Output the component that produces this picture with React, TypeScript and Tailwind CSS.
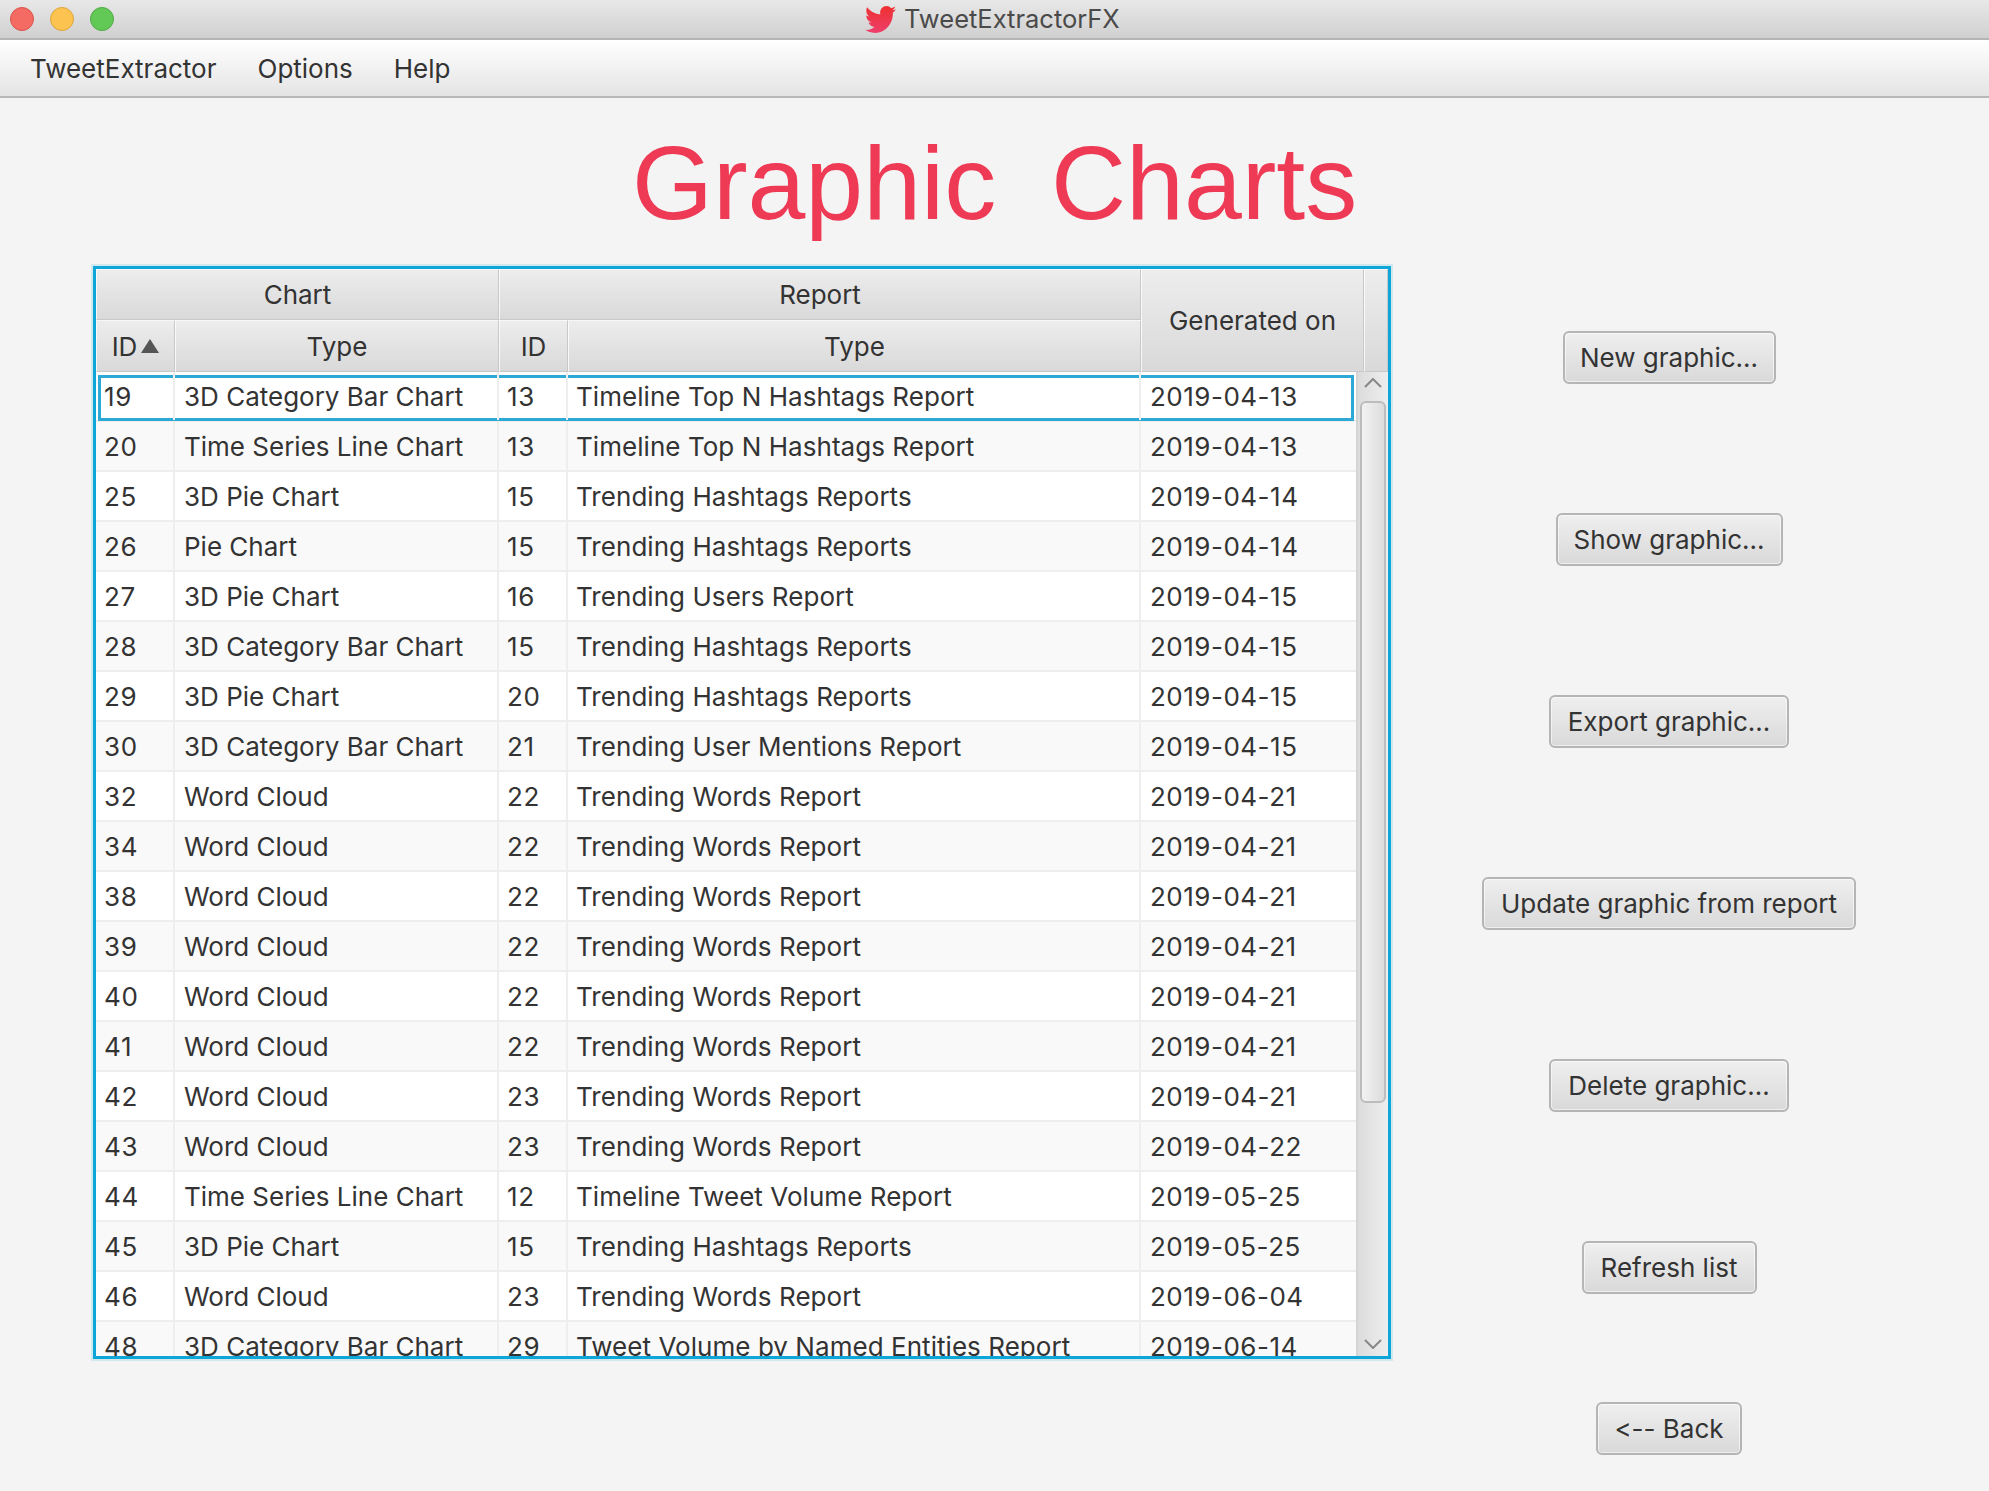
const rows: [string, string, string, string, string][] = [
  ["19", "3D Category Bar Chart", "13", "Timeline Top N Hashtags Report", "2019-04-13"],
  ["20", "Time Series Line Chart", "13", "Timeline Top N Hashtags Report", "2019-04-13"],
  ["25", "3D Pie Chart", "15", "Trending Hashtags Reports", "2019-04-14"],
  ["26", "Pie Chart", "15", "Trending Hashtags Reports", "2019-04-14"],
  ["27", "3D Pie Chart", "16", "Trending Users Report", "2019-04-15"],
  ["28", "3D Category Bar Chart", "15", "Trending Hashtags Reports", "2019-04-15"],
  ["29", "3D Pie Chart", "20", "Trending Hashtags Reports", "2019-04-15"],
  ["30", "3D Category Bar Chart", "21", "Trending User Mentions Report", "2019-04-15"],
  ["32", "Word Cloud", "22", "Trending Words Report", "2019-04-21"],
  ["34", "Word Cloud", "22", "Trending Words Report", "2019-04-21"],
  ["38", "Word Cloud", "22", "Trending Words Report", "2019-04-21"],
  ["39", "Word Cloud", "22", "Trending Words Report", "2019-04-21"],
  ["40", "Word Cloud", "22", "Trending Words Report", "2019-04-21"],
  ["41", "Word Cloud", "22", "Trending Words Report", "2019-04-21"],
  ["42", "Word Cloud", "23", "Trending Words Report", "2019-04-21"],
  ["43", "Word Cloud", "23", "Trending Words Report", "2019-04-22"],
  ["44", "Time Series Line Chart", "12", "Timeline Tweet Volume Report", "2019-05-25"],
  ["45", "3D Pie Chart", "15", "Trending Hashtags Reports", "2019-05-25"],
  ["46", "Word Cloud", "23", "Trending Words Report", "2019-06-04"],
  ["48", "3D Category Bar Chart", "29", "Tweet Volume by Named Entities Report", "2019-06-14"],
];

const buttons = [
  { label: "New graphic...", w: "w-[213px]" },
  { label: "Show graphic...", w: "w-[227px]" },
  { label: "Export graphic...", w: "w-[240px]" },
  { label: "Update graphic from report", w: "w-[374px]" },
  { label: "Delete graphic...", w: "w-[240px]" },
  { label: "Refresh list", w: "w-[175px]" },
];

function HeaderCell({ className, children }: { className: string; children: React.ReactNode }) {
  return (
    <div className={`flex items-center justify-center border border-white/80 border-r-[#c8c8c8] border-b-[#c8c8c8] bg-gradient-to-b from-[#ededed] to-[#d9d9d9] ${className}`}>
      {children}
    </div>
  );
}

function PushButton({ label, w }: { label: string; w: string }) {
  return (
    <button className={`flex h-[53px] items-center justify-center rounded-[6px] border-2 border-[#b5b5b5] bg-gradient-to-b from-[#efefef] to-[#d9d9d9] text-[26px] text-[#333] shadow-[inset_0_0_0_1px_rgba(255,255,255,0.55)] [font-feature-settings:'calt'_0] ${w}`}>
      {label}
    </button>
  );
}

export default function App() {
  return (
    <div className="h-[1491px] w-[1989px] overflow-hidden bg-[#f4f4f4] font-['Inter','Liberation_Sans',sans-serif] text-[#333]">
      {/* title bar */}
      <div className="flex h-10 items-center border-b-2 border-[#b4b4b4] bg-gradient-to-b from-[#e8e8e8] to-[#d0d0d0] pl-[10px]">
        <div className="flex w-[855px] gap-4">
          <div className="size-6 rounded-full border border-[#d9534c] bg-[#f46b63]" />
          <div className="size-6 rounded-full border border-[#dba63c] bg-[#fcc350]" />
          <div className="size-6 rounded-full border border-[#4faa46] bg-[#62c856]" />
        </div>
        <svg viewBox="0 0 512 512" preserveAspectRatio="none" className="mr-[8px] h-[33px] w-[31px]">
          <defs>
            <linearGradient id="bird" x1="0" y1="0" x2="0" y2="1">
              <stop offset="0" stopColor="#ee3030" />
              <stop offset="1" stopColor="#ee3f6c" />
            </linearGradient>
          </defs>
          <path
            fill="url(#bird)"
            d="M459.37 151.716c.325 4.548.325 9.097.325 13.645 0 138.72-105.583 298.558-298.558 298.558-59.452 0-114.68-17.219-161.137-47.106 8.447.974 16.568 1.299 25.34 1.299 49.055 0 94.213-16.568 130.274-44.832-46.132-.975-84.792-31.188-98.112-72.772 6.498.974 12.995 1.624 19.818 1.624 9.421 0 18.843-1.3 27.614-3.573-48.081-9.747-84.143-51.98-84.143-102.985v-1.299c13.969 7.797 30.214 12.67 47.431 13.319-28.264-18.843-46.781-51.005-46.781-87.391 0-19.492 5.197-37.36 14.294-52.954 51.655 63.675 129.3 105.258 216.365 109.807-1.624-7.797-2.599-15.918-2.599-24.04 0-57.828 46.782-104.934 104.934-104.934 30.213 0 57.502 12.67 76.67 33.137 23.715-4.548 46.456-13.32 66.599-25.34-7.798 24.366-24.366 44.833-46.132 57.827 21.117-2.273 41.584-8.122 60.426-16.243-14.292 20.791-32.161 39.308-52.628 54.253z"
          />
        </svg>
        <span className="text-[25.5px] text-[#4a4a4a]">TweetExtractorFX</span>
      </div>

      {/* menu bar */}
      <div className="flex h-[58px] items-center gap-[41px] border-b-2 border-[#b8b8b8] bg-gradient-to-b from-white to-[#e4e4e4] pl-[30px] text-[26px]">
        <span>TweetExtractor</span>
        <span>Options</span>
        <span>Help</span>
      </div>

      <h1 className="mt-[10px] h-[158px] whitespace-pre pl-[632px] font-['Liberation_Sans',sans-serif] text-[104px] leading-[150px] text-[#ee3a55] [word-spacing:-1.5px]">
        Graphic  Charts
      </h1>

      <div className="flex">
        {/* table */}
        <div className="ml-[93px] flex h-[1093px] w-[1298px] flex-col overflow-hidden border-[3px] border-[#0ea5d8] bg-white text-[26px] shadow-[0_0_0_2px_rgba(14,165,216,0.15)]">
          <div className="flex h-[103px] shrink-0">
            <div className="flex w-[403px] flex-col">
              <HeaderCell className="h-[51px]">Chart</HeaderCell>
              <div className="flex h-[52px]">
                <HeaderCell className="w-[79px] gap-1">
                  ID
                  <svg viewBox="0 0 18 14" className="h-[14px] w-[18px] fill-[#555]">
                    <path d="M9 0l9 14H0z" />
                  </svg>
                </HeaderCell>
                <HeaderCell className="w-[324px]">Type</HeaderCell>
              </div>
            </div>
            <div className="flex w-[642px] flex-col">
              <HeaderCell className="h-[51px]">Report</HeaderCell>
              <div className="flex h-[52px]">
                <HeaderCell className="w-[69px]">ID</HeaderCell>
                <HeaderCell className="w-[573px]">Type</HeaderCell>
              </div>
            </div>
            <HeaderCell className="w-[223px]">Generated on</HeaderCell>
            <HeaderCell className="flex-1">{null}</HeaderCell>
          </div>

          <div className="flex min-h-0 flex-1">
            <div className="min-w-0 flex-1 overflow-hidden">
              {rows.map((r, i) => (
                <div
                  key={r[0]}
                  className={`relative grid h-[50px] grid-cols-[79px_324px_69px_573px_1fr] border-b-2 border-[#eeeeee] ${
                    i % 2 === 0 ? "bg-white" : "bg-[#f9f9f9]"
                  }`}
                >
                  {i === 0 && (
                    <div className="absolute inset-x-[2px] top-[3px] bottom-[-1px] border-[3px] border-[#2ea9d6]" />
                  )}
                  <div className="relative z-10 flex items-center border-r-2 border-[#eeeeee] pl-[8px] tracking-[0.6px]">{r[0]}</div>
                  <div className="relative z-10 flex items-center border-r-2 border-[#eeeeee] pl-[9px]">{r[1]}</div>
                  <div className="relative z-10 flex items-center border-r-2 border-[#eeeeee] pl-[8px] tracking-[0.6px]">{r[2]}</div>
                  <div className="relative z-10 flex items-center border-r-2 border-[#eeeeee] pl-[8px] tracking-[0.05px]">{r[3]}</div>
                  <div className="relative z-10 flex items-center pl-[9px] tracking-[0.5px]">{r[4]}</div>
                </div>
              ))}
            </div>

            {/* scroll bar */}
            <div className="flex w-[32px] shrink-0 flex-col items-center border-l-2 border-[#d4d4d4] bg-gradient-to-r from-[#dcdcdc] to-[#eeeeee]">
              <svg viewBox="0 0 18 10" className="mt-[6px] h-[10px] w-[18px] fill-none stroke-[#888] stroke-2">
                <path d="M1 9l8-8 8 8" />
              </svg>
              <div className="mt-[13px] h-[702px] w-[26px] rounded-[6px] border-2 border-[#bcbcbc] bg-gradient-to-r from-[#f2f2f2] to-[#dcdcdc]" />
              <svg viewBox="0 0 18 10" className="mt-[236px] h-[10px] w-[18px] fill-none stroke-[#888] stroke-2">
                <path d="M1 1l8 8 8-8" />
              </svg>
            </div>
          </div>
        </div>

        {/* actions */}
        <div className="flex flex-1 flex-col items-center pt-[65px] pr-[42px]">
          <div className="flex flex-col items-center gap-[129px]">
            {buttons.map((b) => (
              <PushButton key={b.label} {...b} />
            ))}
          </div>
          <div className="mt-[108px]">
            <PushButton label="<-- Back" w="w-[146px]" />
          </div>
        </div>
      </div>
    </div>
  );
}
